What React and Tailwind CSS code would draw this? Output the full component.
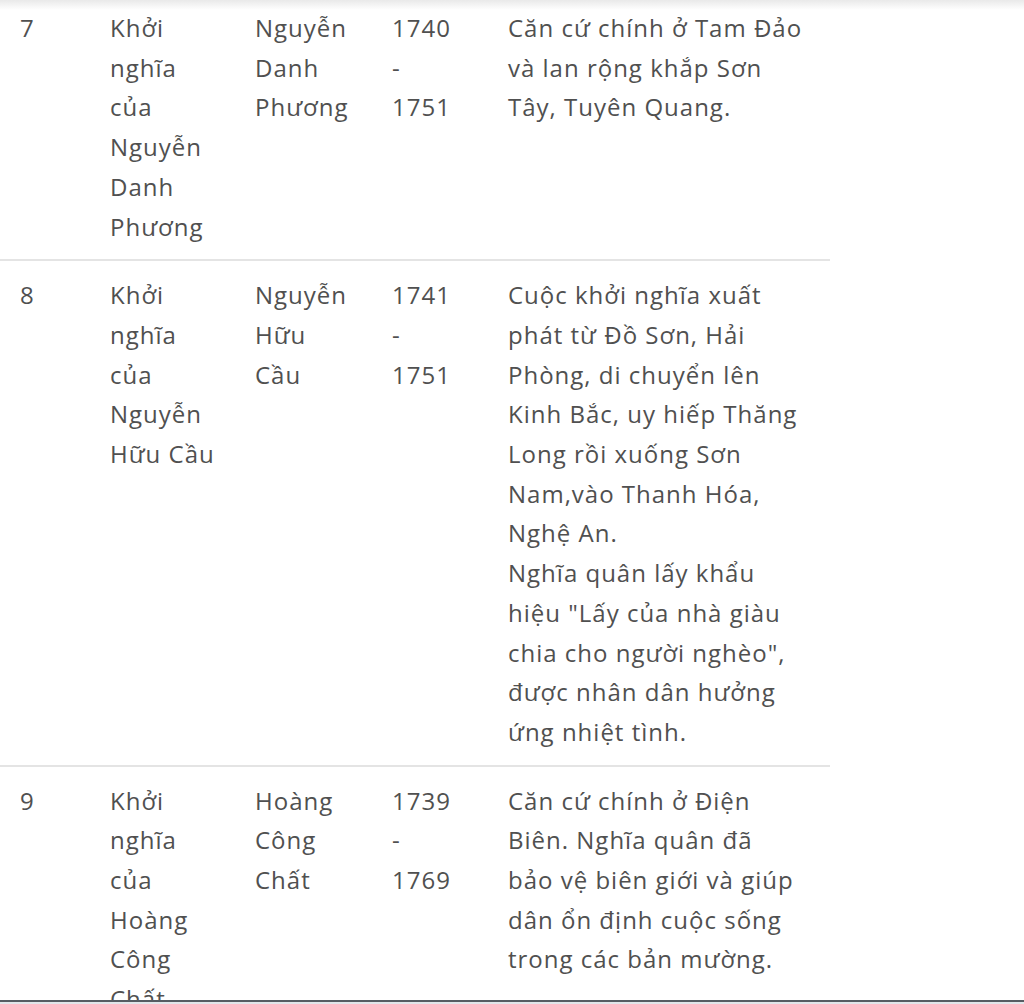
import React from "react";

const rows = [
  {
    n: "7",
    name: ["Khởi", "nghĩa", "của", "Nguyễn", "Danh", "Phương"],
    leader: ["Nguyễn", "Danh", "Phương"],
    years: ["1740", "-", "1751"],
    desc: ["Căn cứ chính ở Tam Đảo", "và lan rộng khắp Sơn", "Tây, Tuyên Quang."],
  },
  {
    n: "8",
    name: ["Khởi", "nghĩa", "của", "Nguyễn", "Hữu Cầu"],
    leader: ["Nguyễn", "Hữu", "Cầu"],
    years: ["1741", "-", "1751"],
    desc: [
      "Cuộc khởi nghĩa xuất",
      "phát từ Đồ Sơn, Hải",
      "Phòng, di chuyển lên",
      "Kinh Bắc, uy hiếp Thăng",
      "Long rồi xuống Sơn",
      "Nam,vào Thanh Hóa,",
      "Nghệ An.",
      "Nghĩa quân lấy khẩu",
      "hiệu \"Lấy của nhà giàu",
      "chia cho người nghèo\",",
      "được nhân dân hưởng",
      "ứng nhiệt tình.",
    ],
  },
  {
    n: "9",
    name: ["Khởi", "nghĩa", "của", "Hoàng", "Công", "Chất"],
    leader: ["Hoàng", "Công", "Chất"],
    years: ["1739", "-", "1769"],
    desc: [
      "Căn cứ chính ở Điện",
      "Biên. Nghĩa quân đã",
      "bảo vệ biên giới và giúp",
      "dân ổn định cuộc sống",
      "trong các bản mường.",
    ],
  },
];

function Lines({ items }) {
  return (
    <div className="flex flex-col">
      {items.map((t, i) => (
        <span key={i} className="whitespace-nowrap">
          {t}
        </span>
      ))}
    </div>
  );
}

export default function App() {
  return (
    <div
      className="relative h-[1004px] w-[1024px] overflow-hidden bg-white text-[24px] leading-[39.7px] tracking-[1px] text-[#505050]"
      style={{ fontFamily: '"Open Sans", "Noto Sans", sans-serif' }}
    >
      <div className="-mt-[6px] w-[830px]">
        {rows.map((r, i) => (
          <div
            key={r.n}
            className={
              i === 0
                ? "grid grid-cols-[96px_145px_137px_116px_336px] pt-[14px] pb-[13px]"
                : "grid grid-cols-[96px_145px_137px_116px_336px] border-t-2 border-[#e4e4e4] pt-[14px] pb-[13px]"
            }
          >
            <div className="pl-[20px]">{r.n}</div>
            <div className="pl-[14px]">
              <Lines items={r.name} />
            </div>
            <div className="pl-[14px]">
              <Lines items={r.leader} />
            </div>
            <div className="pl-[14px]">
              <Lines items={r.years} />
            </div>
            <div className="pl-[14px]">
              <Lines items={r.desc} />
            </div>
          </div>
        ))}
      </div>

      <div className="pointer-events-none absolute left-0 top-0 h-[10px] w-full bg-gradient-to-b from-[#e9e9e9] to-white/0" />
      <div className="absolute left-0 top-[1000px] h-[4px] w-full border-t-2 border-[#575c63] bg-[#e2e6ea]" />
    </div>
  );
}
